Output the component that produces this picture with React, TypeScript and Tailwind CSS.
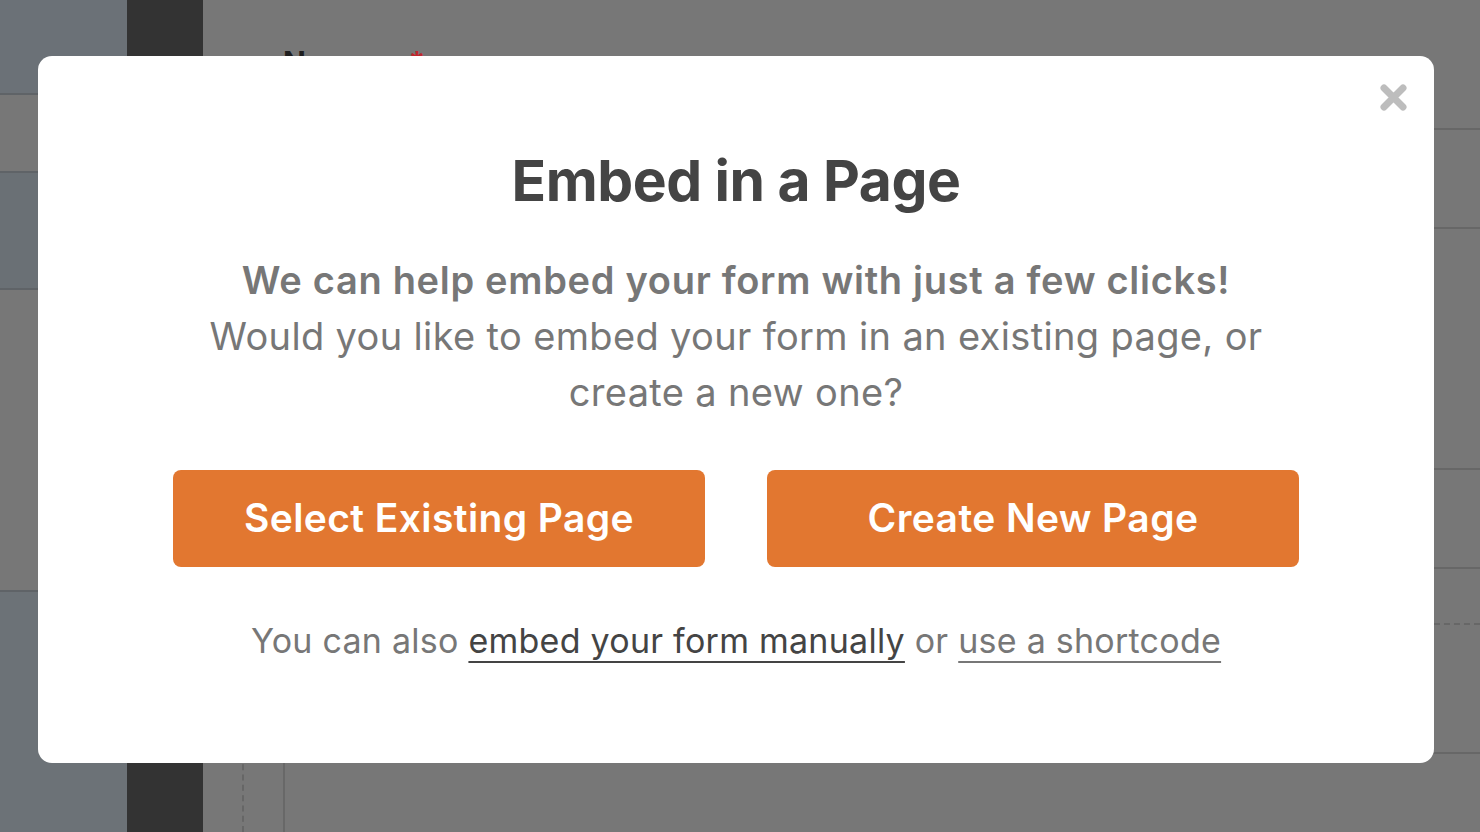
import React from "react";

const font = { fontFamily: "Inter, 'Noto Sans', 'Liberation Sans', sans-serif" };

function CloseIcon() {
  return (
    <svg viewBox="0 0 27 27" className="h-[27px] w-[27px]">
      <path d="M4 4 L23 23 M23 4 L4 23" stroke="#bdbdbd" strokeWidth="7" strokeLinecap="round" />
    </svg>
  );
}

// Dimmed page behind the modal.
function Backdrop() {
  return (
    <div className="flex h-[832px] w-full">
      <div className="flex w-[127px] flex-col">
        <div className="h-[95px] border-b-2 border-[#5f6367] bg-[#6b7177]" />
        <div className="h-[78px] border-b-2 border-[#5f6367] bg-[#777]" />
        <div className="h-[117px] border-b-2 border-[#5f6367] bg-[#6a7075]" />
        <div className="h-[302px] border-b-2 border-[#5f6367] bg-[#777]" />
        <div className="flex-1 bg-[#6c7277]" />
      </div>
      <div className="w-[76px] bg-[#333]" />
      <div className="flex flex-1 flex-col bg-[#777]">
        <div className="h-[130px] border-b-2 border-[#676767] pl-[80px] pt-[47px]">
          <span className="text-[30px] font-bold leading-none text-[#1e1e1e]">Name</span>
          <span className="ml-[40px] text-[30px] font-bold leading-none text-[#c0262d]">*</span>
        </div>
        <div className="h-[99px] border-b-2 border-[#676767]" />
        <div className="h-[241px] border-b-2 border-[#676767]" />
        <div className="h-[99px] border-b-2 border-[#676767]" />
        <div className="h-[56px] border-b-2 border-dashed border-[#676767]" />
        <div className="h-[129px] border-b-2 border-[#676767]" />
        <div className="flex flex-1">
          <div className="ml-[39px] w-[41px] border-l-2 border-dashed border-[#666]" />
          <div className="border-l-2 border-[#686868]" />
        </div>
      </div>
    </div>
  );
}

export default function App() {
  return (
    <div className="relative h-[832px] w-[1480px] overflow-hidden" style={font}>
      <Backdrop />
      <div className="absolute inset-0 pl-[38px] pt-[56px]">
        <div className="relative flex h-[707px] w-[1396px] flex-col items-center rounded-[14px] bg-white pt-[89px]">
          <button className="absolute right-[27px] top-[28px]" aria-label="Close">
            <CloseIcon />
          </button>
          <h1 className="text-[57px] font-bold leading-[72px] tracking-[-0.5px] text-[#444]">Embed in a Page</h1>
          <div className="mt-[35px] text-center text-[38px] leading-[56px] tracking-[0.35px] text-[#777]">
            <p className="font-semibold tracking-[0.7px]">We can help embed your form with just a few clicks!</p>
            <p>Would you like to embed your form in an existing page, or</p>
            <p>create a new one?</p>
          </div>
          <div className="mt-[50px] flex gap-[62px]">
            <button className="h-[97px] w-[532px] rounded-[8px] bg-[#e27730] text-[39px] font-semibold tracking-[0.4px] text-white">
              Select Existing Page
            </button>
            <button className="h-[97px] w-[532px] rounded-[8px] bg-[#e27730] text-[39px] font-semibold tracking-[0.4px] text-white">
              Create New Page
            </button>
          </div>
          <p className="mt-[50px] text-[34px] leading-[48px] tracking-[0.25px] text-[#777]">
            You can also{" "}
            <a className="text-[#444] underline underline-offset-[8px] decoration-2">embed your form manually</a> or{" "}
            <a className="text-[#777] underline underline-offset-[8px] decoration-2">use a shortcode</a>
          </p>
        </div>
      </div>
    </div>
  );
}
